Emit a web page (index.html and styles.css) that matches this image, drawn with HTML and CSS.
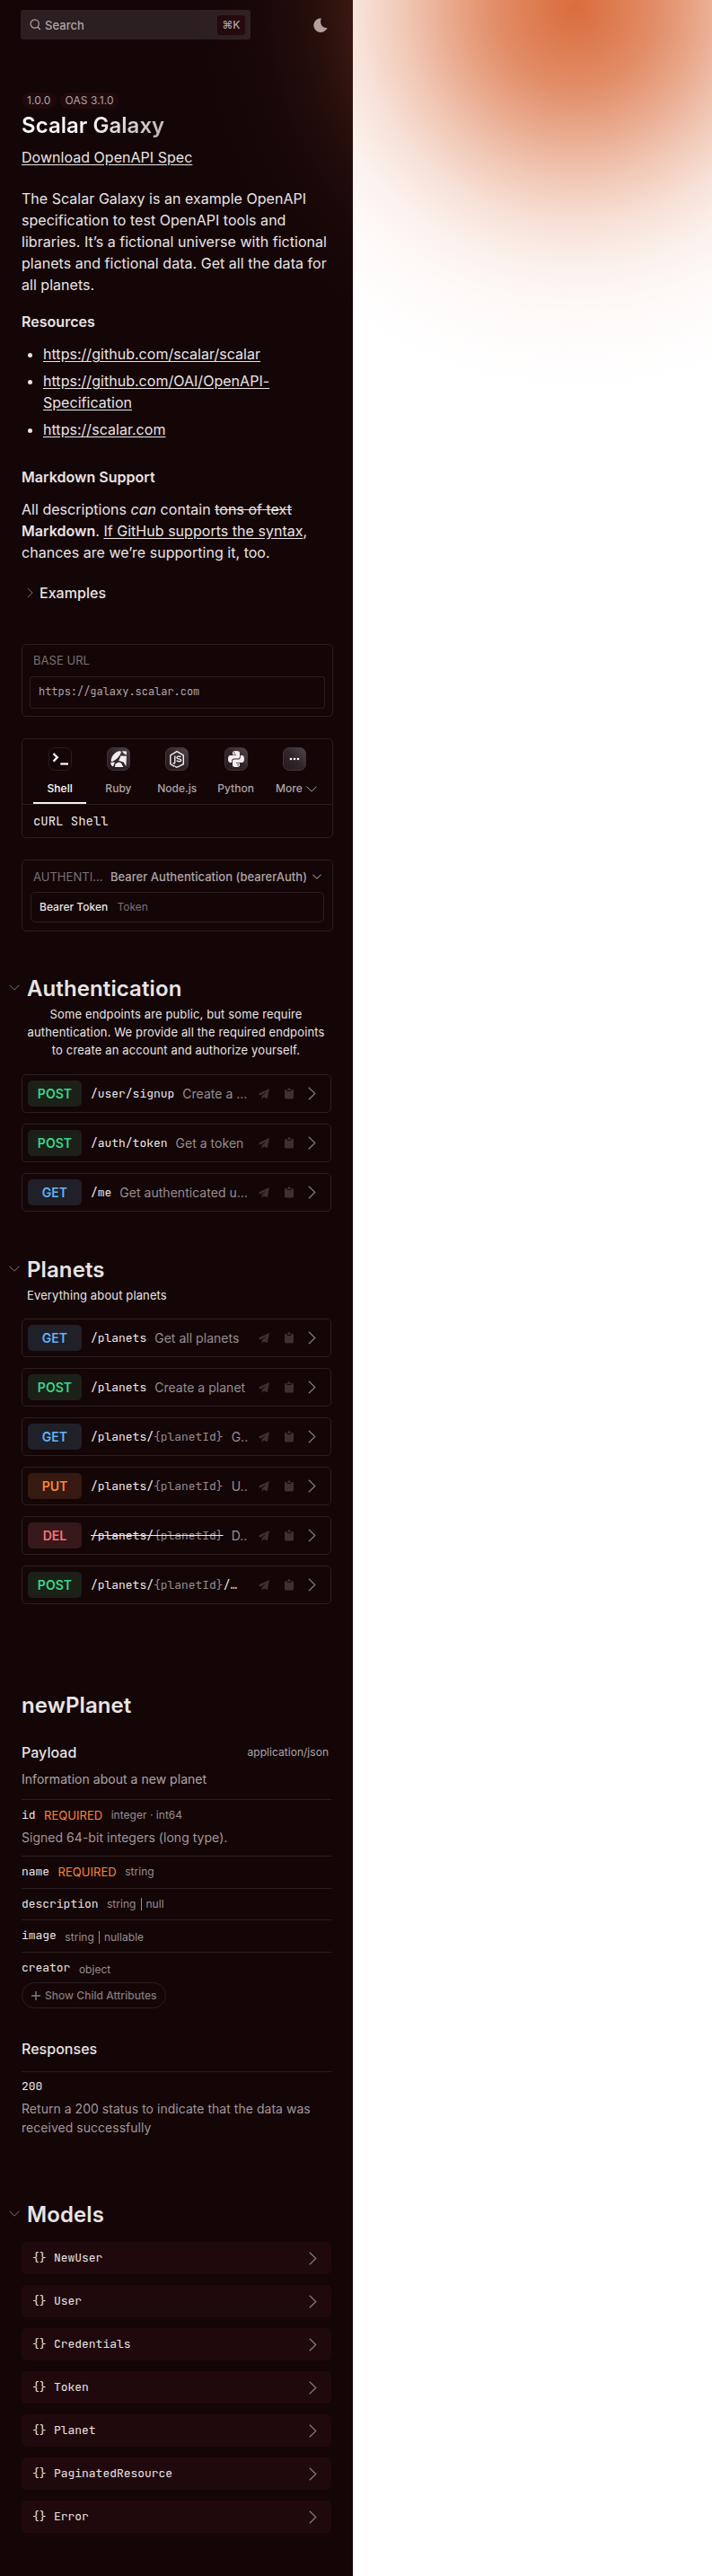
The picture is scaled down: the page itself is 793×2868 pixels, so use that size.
FILE: index.html
```html
<!DOCTYPE html>
<html lang="en">
<head>
<meta charset="utf-8">
<title>Scalar Galaxy</title>
<link rel="stylesheet" href="styles.css">
</head>
<body>
<svg class="sprite" width="0" height="0">
  <defs>
    <linearGradient id="tile" x1="0" y1="1" x2="1" y2="0"><stop offset="0" stop-color="#271a1e"/><stop offset=".5" stop-color="#30252a"/><stop offset="1" stop-color="#51484c"/></linearGradient>
  </defs>
  <symbol id="down" viewBox="0 0 12 7"><path d="M.5 .7 6 6.2 11.500 .7" fill="none" stroke="currentColor" stroke-width="1"/></symbol>
  <symbol id="right" viewBox="0 0 9 15"><path d="M.8 .8 7.800 7.500 .8 14.200" fill="none" stroke="currentColor" stroke-width="1.200"/></symbol>
  <symbol id="send" viewBox="0 0 12 12"><path d="M12 0 9.800 11.300 5.800 9.600 3.700 12V8.300L8.800 3.400 2.300 7.600 0 6.400 1 5Z" fill="currentColor"/></symbol>
  <symbol id="clip" viewBox="0 0 10 13"><path d="M1.400 1.900h1.200v2.200h4.800V1.900h1.200c.8 0 1.400.6 1.400 1.400v7.800c0 .8-.6 1.400-1.400 1.400H1.400C.6 12.500 0 11.900 0 11.100V3.300C0 2.500.6 1.900 1.400 1.900Z" fill="currentColor"/><path d="M3.500 1.500C3.500-.2 6.500-.2 6.500 1.500V3.100h-3Z" fill="currentColor"/></symbol>
</svg>
<main class="panel">
  <header class="top">
    <div class="search">
      <svg width="13" height="13" viewBox="0 0 13 13"><circle cx="5.700" cy="5.500" r="4.600" fill="none" stroke="currentColor" stroke-width="1.200"/><path d="m9 9 2.700 3" stroke="currentColor" stroke-width="1.300"/></svg>
      <span>Search</span><kbd>⌘K</kbd>
    </div>
    <svg class="moon" width="16" height="16" viewBox="0 0 16 16"><path d="M8.800 .3A7.900 7.900 0 1 0 15.700 10.700C11 12 6.300 7 8.800 .3Z" fill="currentColor"/></svg>
  </header>

  <section class="intro">
    <div class="tags"><span>1.0.0</span><span>OAS 3.1.0</span></div>
    <h1><span>Scalar Galaxy</span></h1>
    <a class="download">Download OpenAPI Spec</a>
    <p class="about">The Scalar Galaxy is an example OpenAPI specification to test OpenAPI tools and libraries. It’s a fictional universe with fictional planets and fictional data. Get all the data for all planets.</p>
    <h3>Resources</h3>
    <ul>
      <li><a>https://github.com/scalar/scalar</a></li>
      <li><a>https://github.com/OAI/OpenAPI-Specification</a></li>
      <li><a>https://scalar.com</a></li>
    </ul>
    <h3 class="support">Markdown Support</h3>
    <p>All descriptions <em>can</em> contain <del>tons of text</del> <b>Markdown</b>. <a>If GitHub supports the syntax</a>, chances are we’re supporting it, too.</p>
    <div class="examples"><svg width="7" height="12" viewBox="0 0 9 15"><use href="#right"/></svg>Examples</div>
  </section>

  <section class="card base">
    <div class="label">BASE URL</div>
    <div class="url mono">https://galaxy.scalar.com</div>
  </section>

  <section class="card clients">
    <div class="tabs">
      <div class="tab active"><svg width="26" height="26" viewBox="0 0 26 26"><rect x=".5" y=".5" width="25" height="25" rx="6.500" fill="#140507" stroke="#2b1e21"/><path d="m5.500 7 4.300 4.300-4.300 4.300" fill="none" stroke="#fff" stroke-width="2.300"/><path d="M13.300 18.500h8.700" stroke="#fff" stroke-width="2.200"/></svg><span>Shell</span></div>
      <div class="tab"><svg width="26" height="26" viewBox="0 0 26 26"><rect x=".5" y=".5" width="25" height="25" rx="6.500" fill="url(#tile)" stroke="#40363a"/><path d="M4.800 15.800C4 11 9.500 4 14.500 4.200 18 4.500 14 10 11 12.800 8.500 15 5.500 16.500 4.800 15.800ZM16.800 4.300 22 4.500 21.800 8.500Q18.500 7.500 16.800 4.300ZM15.500 9.500 21.900 9.700 21.500 21.300 18.500 16.500 13.200 15ZM4.200 17l4.700-.5-1.800 4.800Q4.500 21 4.200 17ZM9.500 18.500l3.500-2 3 1L18.300 22H9Z" fill="#f2eeee"/></svg><span>Ruby</span></div>
      <div class="tab"><svg width="26" height="26" viewBox="0 0 26 26"><rect x=".5" y=".5" width="25" height="25" rx="6.500" fill="url(#tile)" stroke="#40363a"/><path d="M10.700 20.500 9.500 21 5.800 18.700V8.800L13 4.600l7.300 4.200v9.900L13 22.300l-2-1" fill="none" stroke="#f2eeee" stroke-width="1.400"/><path d="M10.800 9.500v7q0 2-2.300 1.200M17.400 10.500c-2-.8-4.500-.4-4.500 1 0 2 4.800.8 4.800 3 0 1.600-4 1.700-5 .2" fill="none" stroke="#f2eeee" stroke-width="1.400"/></svg><span>Node.js</span></div>
      <div class="tab"><svg width="26" height="26" viewBox="0 0 26 26"><rect x=".5" y=".5" width="25" height="25" rx="6.500" fill="url(#tile)" stroke="#40363a"/><path d="M9 8.300V6q0-2 4-2t4 2v4.500q0 2-2 2h-4q-2.800 0-2.800 2.800V17H6.500Q4 17 4 13t2.500-4H13v-.7Z" fill="#f2eeee"/><path d="M17 17.700V20q0 2-4 2t-4-2v-4.500q0-2 2-2h4q2.800 0 2.800-2.800V9h1.700Q22 9 22 13t-2.500 4H13v.7Z" fill="#f2eeee"/><circle cx="10.900" cy="6.300" r=".8" fill="#30252a"/><circle cx="15.100" cy="19.700" r=".8" fill="#30252a"/></svg><span>Python</span></div>
      <div class="tab"><svg width="26" height="26" viewBox="0 0 26 26"><rect x=".5" y=".5" width="25" height="25" rx="6.500" fill="url(#tile)" stroke="#40363a"/><circle cx="9" cy="13" r="1.300" fill="#fff"/><circle cx="13" cy="13" r="1.300" fill="#fff"/><circle cx="17" cy="13" r="1.300" fill="#fff"/></svg><span class="more">More <svg width="12" height="7"><use href="#down"/></svg></span></div>
    </div>
    <div class="curl mono">cURL Shell</div>
  </section>

  <section class="card auth">
    <div class="authhead"><span class="label">AUTHENTI…</span><span class="scheme">Bearer Authentication (bearerAuth)</span><svg width="10" height="6" viewBox="0 0 12 7"><use href="#down"/></svg></div>
    <div class="token"><span>Bearer Token</span><i>Token</i></div>
  </section>

  <section class="group first">
    <h2><svg width="12" height="7"><use href="#down"/></svg>Authentication</h2>
    <p class="desc">Some endpoints are public, but some require authentication. We provide all the required endpoints to create an account and authorize yourself.</p>
    <div class="op"><b class="post">POST</b><span class="path mono">/user/signup</span><span class="sum">Create a …</span><svg class="send" width="12" height="12"><use href="#send"/></svg><svg class="clip" width="10" height="13"><use href="#clip"/></svg><svg class="go" width="9" height="15"><use href="#right"/></svg></div>
    <div class="op"><b class="post">POST</b><span class="path mono">/auth/token</span><span class="sum">Get a token</span><svg class="send" width="12" height="12"><use href="#send"/></svg><svg class="clip" width="10" height="13"><use href="#clip"/></svg><svg class="go" width="9" height="15"><use href="#right"/></svg></div>
    <div class="op"><b class="get">GET</b><span class="path mono">/me</span><span class="sum">Get authenticated u…</span><svg class="send" width="12" height="12"><use href="#send"/></svg><svg class="clip" width="10" height="13"><use href="#clip"/></svg><svg class="go" width="9" height="15"><use href="#right"/></svg></div>
  </section>

  <section class="group">
    <h2><svg width="12" height="7"><use href="#down"/></svg>Planets</h2>
    <p class="desc left">Everything about planets</p>
    <div class="op"><b class="get">GET</b><span class="path mono">/planets</span><span class="sum">Get all planets</span><svg class="send" width="12" height="12"><use href="#send"/></svg><svg class="clip" width="10" height="13"><use href="#clip"/></svg><svg class="go" width="9" height="15"><use href="#right"/></svg></div>
    <div class="op"><b class="post">POST</b><span class="path mono">/planets</span><span class="sum">Create a planet</span><svg class="send" width="12" height="12"><use href="#send"/></svg><svg class="clip" width="10" height="13"><use href="#clip"/></svg><svg class="go" width="9" height="15"><use href="#right"/></svg></div>
    <div class="op"><b class="get">GET</b><span class="path mono">/planets/<i>{planetId}</i></span><span class="sum">G..</span><svg class="send" width="12" height="12"><use href="#send"/></svg><svg class="clip" width="10" height="13"><use href="#clip"/></svg><svg class="go" width="9" height="15"><use href="#right"/></svg></div>
    <div class="op"><b class="put">PUT</b><span class="path mono">/planets/<i>{planetId}</i></span><span class="sum">U..</span><svg class="send" width="12" height="12"><use href="#send"/></svg><svg class="clip" width="10" height="13"><use href="#clip"/></svg><svg class="go" width="9" height="15"><use href="#right"/></svg></div>
    <div class="op"><b class="del">DEL</b><span class="path mono gone">/planets/<i>{planetId}</i></span><span class="sum">D..</span><svg class="send" width="12" height="12"><use href="#send"/></svg><svg class="clip" width="10" height="13"><use href="#clip"/></svg><svg class="go" width="9" height="15"><use href="#right"/></svg></div>
    <div class="op"><b class="post">POST</b><span class="path mono">/planets/<i>{planetId}</i>/…</span><svg class="send" width="12" height="12"><use href="#send"/></svg><svg class="clip" width="10" height="13"><use href="#clip"/></svg><svg class="go" width="9" height="15"><use href="#right"/></svg></div>
  </section>

  <section class="hook">
    <h2>newPlanet</h2>
    <div class="payload"><h4>Payload</h4><span>application/json</span></div>
    <p class="info">Information about a new planet</p>
    <div class="prop tall"><div class="row"><span class="mono">id</span><em>REQUIRED</em><small>integer · int64</small></div><p>Signed 64-bit integers (long type).</p></div>
    <div class="prop"><div class="row"><span class="mono">name</span><em>REQUIRED</em><small>string</small></div></div>
    <div class="prop short"><div class="row"><span class="mono">description</span><small>string<u></u>null</small></div></div>
    <div class="prop"><div class="row"><span class="mono">image</span><small class="low">string<u></u>nullable</small></div></div>
    <div class="prop last"><div class="row"><span class="mono">creator</span><small class="low">object</small></div>
      <div class="child"><svg width="10" height="10" viewBox="0 0 10 10"><path d="M5 0v10M0 5h10" stroke="currentColor" stroke-width="1.400"/></svg>Show Child Attributes</div></div>
    <h4 class="resp">Responses</h4>
    <div class="status"><span class="mono">200</span><p>Return a 200 status to indicate that the data was received successfully</p></div>
  </section>

  <section class="group models">
    <h2><svg width="12" height="7"><use href="#down"/></svg>Models</h2>
    <div class="model mono"><i>{}</i>NewUser<svg width="9" height="15"><use href="#right"/></svg></div>
    <div class="model mono"><i>{}</i>User<svg width="9" height="15"><use href="#right"/></svg></div>
    <div class="model mono"><i>{}</i>Credentials<svg width="9" height="15"><use href="#right"/></svg></div>
    <div class="model mono"><i>{}</i>Token<svg width="9" height="15"><use href="#right"/></svg></div>
    <div class="model mono"><i>{}</i>Planet<svg width="9" height="15"><use href="#right"/></svg></div>
    <div class="model mono"><i>{}</i>PaginatedResource<svg width="9" height="15"><use href="#right"/></svg></div>
    <div class="model mono"><i>{}</i>Error<svg width="9" height="15"><use href="#right"/></svg></div>
  </section>
</main>
<div class="glow"></div>
</body>
</html>
```
FILE: styles.css
```css
* { box-sizing: border-box; margin: 0; padding: 0; }
html { background: #fff; }
body { position: relative; height: 2868px; font: 400 16px/24px Inter, sans-serif; letter-spacing: .03px; color: #e8e4e4; }
svg { display: block; flex: none; }
i, em { font-style: normal; }
a { text-decoration: underline; text-underline-offset: 2px; }
.sprite { position: absolute; }
.mono { font-family: "JetBrains Mono", "DejaVu Sans Mono", monospace; font-size: 13px; letter-spacing: -0.03px; }
.panel { width: 393px; height: 2868px; background: #140507; }
.glow { position: absolute; inset: 0 0 auto 0; height: 480px; pointer-events: none;
  background: radial-gradient(circle at 641px 8px, rgba(217,106,57,.98) 0, rgba(217,106,57,.88) 45px, rgba(217,106,57,.757) 92px, rgba(217,106,57,.57) 142px, rgba(217,106,57,.37) 192px, rgba(217,106,57,.2) 242px, rgba(217,106,57,.09) 292px, rgba(217,106,57,.035) 342px, rgba(217,106,57,.01) 392px, rgba(217,106,57,0) 430px); }

.top { display: flex; align-items: flex-start; justify-content: space-between; height: 103px; padding: 11px 28px 0 23px; color: #aea5a7; }
.search { display: flex; align-items: center; width: 256px; height: 33px; padding: 0 6px 0 10px; border-radius: 3px; background: #2c1f22; font-size: 13px; font-weight: 500; }
.search span { margin-left: 4px; flex: 1; }
.search kbd { width: 31px; height: 22px; border-radius: 3px; background: #20090d; font: 500 12px/22px Inter, sans-serif; text-align: center; }
.moon { margin-top: 9px; }

.intro { padding: 0 24px; }
.tags { display: flex; gap: 4px; height: 18px; }
.tags span { padding: 0 6px; border-radius: 9px; background: #20090d; color: #aea5a7; font-size: 12px; line-height: 18px; letter-spacing: .1px; }
h1 { margin-top: 4px; font-size: 24px; line-height: 30px; font-weight: 600; }
h1 span { background: linear-gradient(135deg, #fff 40%, #b5afb0 100%); background-clip: text; -webkit-background-clip: text; color: transparent; }
.download { display: block; margin-top: 8px; }
.about { margin-top: 22px; }
h3 { margin-top: 17px; font-size: 16px; line-height: 24px; font-weight: 600; }
ul { margin-top: 12px; padding-left: 24px; }
li { margin-bottom: 6px; }
.support { margin: 29px 0 12px; }
.intro em { font-style: italic; }
.intro b { font-weight: 600; }
.examples { display: flex; align-items: center; gap: 7px; margin-top: 21px; padding-left: 6px; font-weight: 500; }
.examples svg { color: #857b7d; }

.card { width: 347px; margin-left: 24px; border: 1px solid #2c1e20; border-radius: 5px; }
.label { color: #7b7173; font-size: 13px; line-height: 20px; }
.base { height: 81px; margin-top: 45px; padding: 7px 8px; }
.base .label { padding-left: 4px; }
.url { height: 36px; margin-top: 8px; padding-left: 9px; border: 1px solid #2c1e20; border-radius: 3px; color: #aea5a7; font-size: 12px; line-height: 32px; }
.clients { height: 111px; margin-top: 24px; }
.tabs { display: flex; gap: 6px; height: 73px; padding-left: 12px; border-bottom: 1px solid #2c1e20; }
.tab { width: 59.300px; padding-top: 9px; display: flex; flex-direction: column; align-items: center; color: #aea5a7; font-size: 12px; font-weight: 500; }
.tab span { margin-top: 8px; white-space: nowrap; }
.tab.active { color: #fff; border-bottom: 2px solid #f5f1f1; }
.more { display: flex; align-items: center; gap: 4px; }
.tab:last-child > span { margin-left: 4px; }
.curl { padding-left: 12px; font-size: 14px; line-height: 36px; }
.auth { height: 80px; margin-top: 24px; padding: 8px 9px; }
.authhead { display: flex; align-items: center; height: 20px; padding-left: 3px; }
.authhead .label { width: 86px; }
.scheme { width: 225px; color: #aea5a7; font-size: 13px; font-weight: 500; white-space: nowrap; }
.token { display: flex; align-items: center; gap: 10px; height: 34px; margin-top: 7px; padding-left: 9px; border: 1px solid #2c1e20; border-radius: 5px; font-size: 12px; font-weight: 450; }
.token i { color: #7b7173; font-weight: 400; }

.group { padding: 0 24px; margin-top: 49px; }
.group.first { margin-top: 48px; }
h2 { font-size: 24px; line-height: 32px; font-weight: 600; letter-spacing: .1px; }
.group h2 { display: flex; align-items: center; gap: 8px; margin-left: -14px; }
.group h2 svg { color: #7d7375; margin-top: -3px; }
.desc { width: 334px; margin: 2px 0 17px 5px; font-size: 13px; line-height: 20px; letter-spacing: .13px; text-align: center; }
.desc.left { padding-left: 1px; text-align: left; margin-bottom: 16px; }
.op { display: flex; align-items: center; width: 345px; height: 43px; margin-bottom: 12px; padding: 0 16px 0 6px; border: 1px solid #2c1e20; border-radius: 5px; }
.op b { width: 60px; height: 29px; border-radius: 5px; text-align: center; font-size: 14px; line-height: 30px; font-weight: 600; }
.post { color: #3bd689; background: #1b2119; }
.get { color: #62b4f5; background: #202029; }
.put { color: #fc8539; background: #361a11; }
.del { color: #fc7279; background: #36181b; }
.path { margin-left: 10px; color: #eee9e9; white-space: nowrap; }
.path i { color: #968c8e; }
.gone { text-decoration: line-through; }
.sum { margin-left: 9px; color: #988e90; font-size: 14px; white-space: nowrap; }
.op .send { margin-left: auto; color: #3d3033; }
.op .clip { margin-left: 17px; color: #3d3033; }
.op .go { margin-left: 16px; color: #857b7d; }

.hook { padding: 0 24px; margin-top: 97px; height: 552px; }
.payload { display: flex; align-items: center; justify-content: space-between; width: 342px; height: 24px; margin-top: 24px; }
h4 { font-size: 16px; font-weight: 500; line-height: 24px; }
.payload span { color: #aea5a7; font-size: 12px; }
.info { height: 40px; padding-top: 7px; color: #aea5a7; font-size: 14px; line-height: 21px; }
.prop { width: 345px; height: 36px; border-top: 1px solid #2c1e20; padding-top: 7px; }
.prop.tall { height: 63px; }
.prop.short { height: 35px; }
.prop.last { height: 63px; }
.prop p, .status p { color: #a0979a; font-size: 14px; line-height: 21px; }
.prop p { margin-top: 4px; }
.row { display: flex; align-items: center; gap: 9.500px; height: 20px; }
.row em { color: #fc8539; font-size: 13px; }
.row small { display: flex; align-items: center; color: #988e90; font-size: 12px; line-height: 20px; }
.row small.low { padding-top: 3px; }
.row u { width: 1px; height: 14px; margin: 0 5px; background: #988e90; }
.child { display: flex; align-items: center; gap: 5px; width: 161px; height: 29px; margin-top: 6px; padding-left: 10px; border: 1px solid #2c1e20; border-radius: 15px; color: #857b7d; font-size: 12px; font-weight: 500; white-space: nowrap; }
.resp { margin-top: 33px; }
.status { width: 345px; margin-top: 13px; padding-top: 6px; border-top: 1px solid #2c1e20; }
.status .mono { display: block; line-height: 20px; }
.status p { margin-top: 4px; }

.models { margin-top: 15px; }
.models h2 { margin-bottom: 14px; }
.model { display: flex; align-items: center; width: 345px; height: 36px; margin-bottom: 12px; padding: 0 16px 0 12px; border-radius: 5px; background: #20090d; color: #e8e4e4; }
.model i { width: 24px; }
.model svg { margin-left: auto; color: #857b7d; }
```
